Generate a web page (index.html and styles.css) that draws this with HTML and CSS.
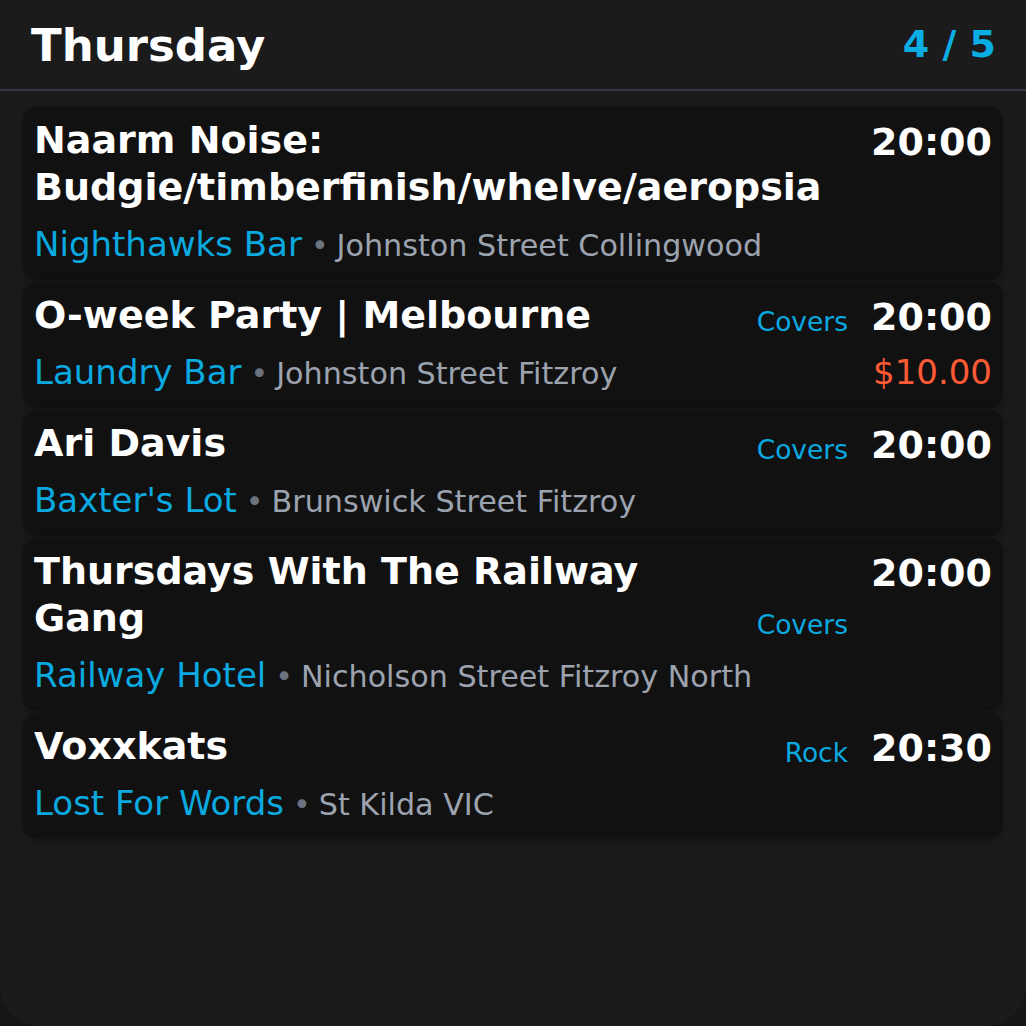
FILE: index.html
```html
<!DOCTYPE html>
<html lang="en">
<head>
<meta charset="utf-8">
<title>Thursday</title>
<link rel="stylesheet" href="styles.css">
</head>
<body>
<div class="screen">
  <header class="header">
    <h1 class="day">Thursday</h1>
    <span class="count">4 / 5</span>
  </header>
  <main class="list">
    <article class="card">
      <div class="top">
        <div class="title">Naarm Noise: Budgie/timberfinish/whelve/aeropsia</div>
        <span class="time">20:00</span>
      </div>
      <div class="bottom">
        <div class="place"><span class="venue">Nighthawks Bar</span><span class="dot">•</span><span class="addr">Johnston Street Collingwood</span></div>
      </div>
    </article>
    <article class="card">
      <div class="top">
        <div class="title">O-week Party | Melbourne</div>
        <span class="tag">Covers</span>
        <span class="time">20:00</span>
      </div>
      <div class="bottom">
        <div class="place"><span class="venue">Laundry Bar</span><span class="dot">•</span><span class="addr">Johnston Street Fitzroy</span></div>
        <span class="price">$10.00</span>
      </div>
    </article>
    <article class="card">
      <div class="top">
        <div class="title">Ari Davis</div>
        <span class="tag">Covers</span>
        <span class="time">20:00</span>
      </div>
      <div class="bottom">
        <div class="place"><span class="venue">Baxter's Lot</span><span class="dot">•</span><span class="addr">Brunswick Street Fitzroy</span></div>
      </div>
    </article>
    <article class="card">
      <div class="top">
        <div class="title">Thursdays With The Railway Gang</div>
        <span class="tag">Covers</span>
        <span class="time">20:00</span>
      </div>
      <div class="bottom">
        <div class="place"><span class="venue">Railway Hotel</span><span class="dot">•</span><span class="addr">Nicholson Street Fitzroy North</span></div>
      </div>
    </article>
    <article class="card">
      <div class="top">
        <div class="title">Voxxkats</div>
        <span class="tag">Rock</span>
        <span class="time">20:30</span>
      </div>
      <div class="bottom">
        <div class="place"><span class="venue">Lost For Words</span><span class="dot">•</span><span class="addr">St Kilda VIC</span></div>
      </div>
    </article>
  </main>
</div>
</body>
</html>
```
FILE: styles.css
```css
* { box-sizing: border-box; }
html, body {
  margin: 0;
  padding: 0;
  background: #161616;
}
body {
  font-family: "DejaVu Sans", "Liberation Sans", sans-serif;
  color: #ffffff;
}
.screen {
  width: 1026px;
  height: 1026px;
  background: #1b1b1b;
  border-radius: 0 0 40px 40px;
  overflow: hidden;
}
.header {
  height: 91px;
  padding: 2px 30px 0 31px;
  display: flex;
  align-items: center;
  justify-content: space-between;
  border-bottom: 2px solid #353a45;
}
.day {
  margin: 0;
  font-size: 45px;
  line-height: 45px;
  font-weight: bold;
  color: #ffffff;
}
.count {
  font-size: 38px;
  line-height: 38px;
  font-weight: bold;
  color: #0aaee3;
  margin-bottom: 4px;
}
.list {
  margin: 16px 23px 0;
  display: flex;
  flex-direction: column;
  gap: 2px;
}
.card {
  background: #111111;
  border-radius: 14px;
  padding: 10px 11px 15px 11px;
  display: flex;
  flex-direction: column;
  gap: 13px;
  box-shadow: 0 2px 8px rgba(0, 0, 0, 0.25);
}
.top {
  display: flex;
  align-items: flex-start;
}
.title {
  flex: 1;
  min-width: 0;
  font-size: 38px;
  line-height: 47px;
  font-weight: bold;
  color: #ffffff;
  padding-right: 28px;
}
.tag {
  align-self: flex-end;
  font-size: 26.5px;
  line-height: 34px;
  color: #0aa9e0;
  margin-right: 23px;
}
.time {
  font-size: 38px;
  line-height: 44px;
  margin-top: 3px;
  font-weight: bold;
  color: #ffffff;
}
.bottom {
  display: flex;
  align-items: baseline;
  justify-content: space-between;
  margin-bottom: -1px;
}
.place {
  display: flex;
  align-items: baseline;
  line-height: 40px;
}
.venue {
  font-size: 34px;
  color: #0aa9e0;
}
.dot {
  font-size: 30px;
  color: #6b7280;
  margin: 0 8px 0 9px;
}
.addr {
  font-size: 30.2px;
  color: #9ca3af;
}
.price {
  font-size: 34px;
  line-height: 40px;
  color: #ff5a36;
}
```
